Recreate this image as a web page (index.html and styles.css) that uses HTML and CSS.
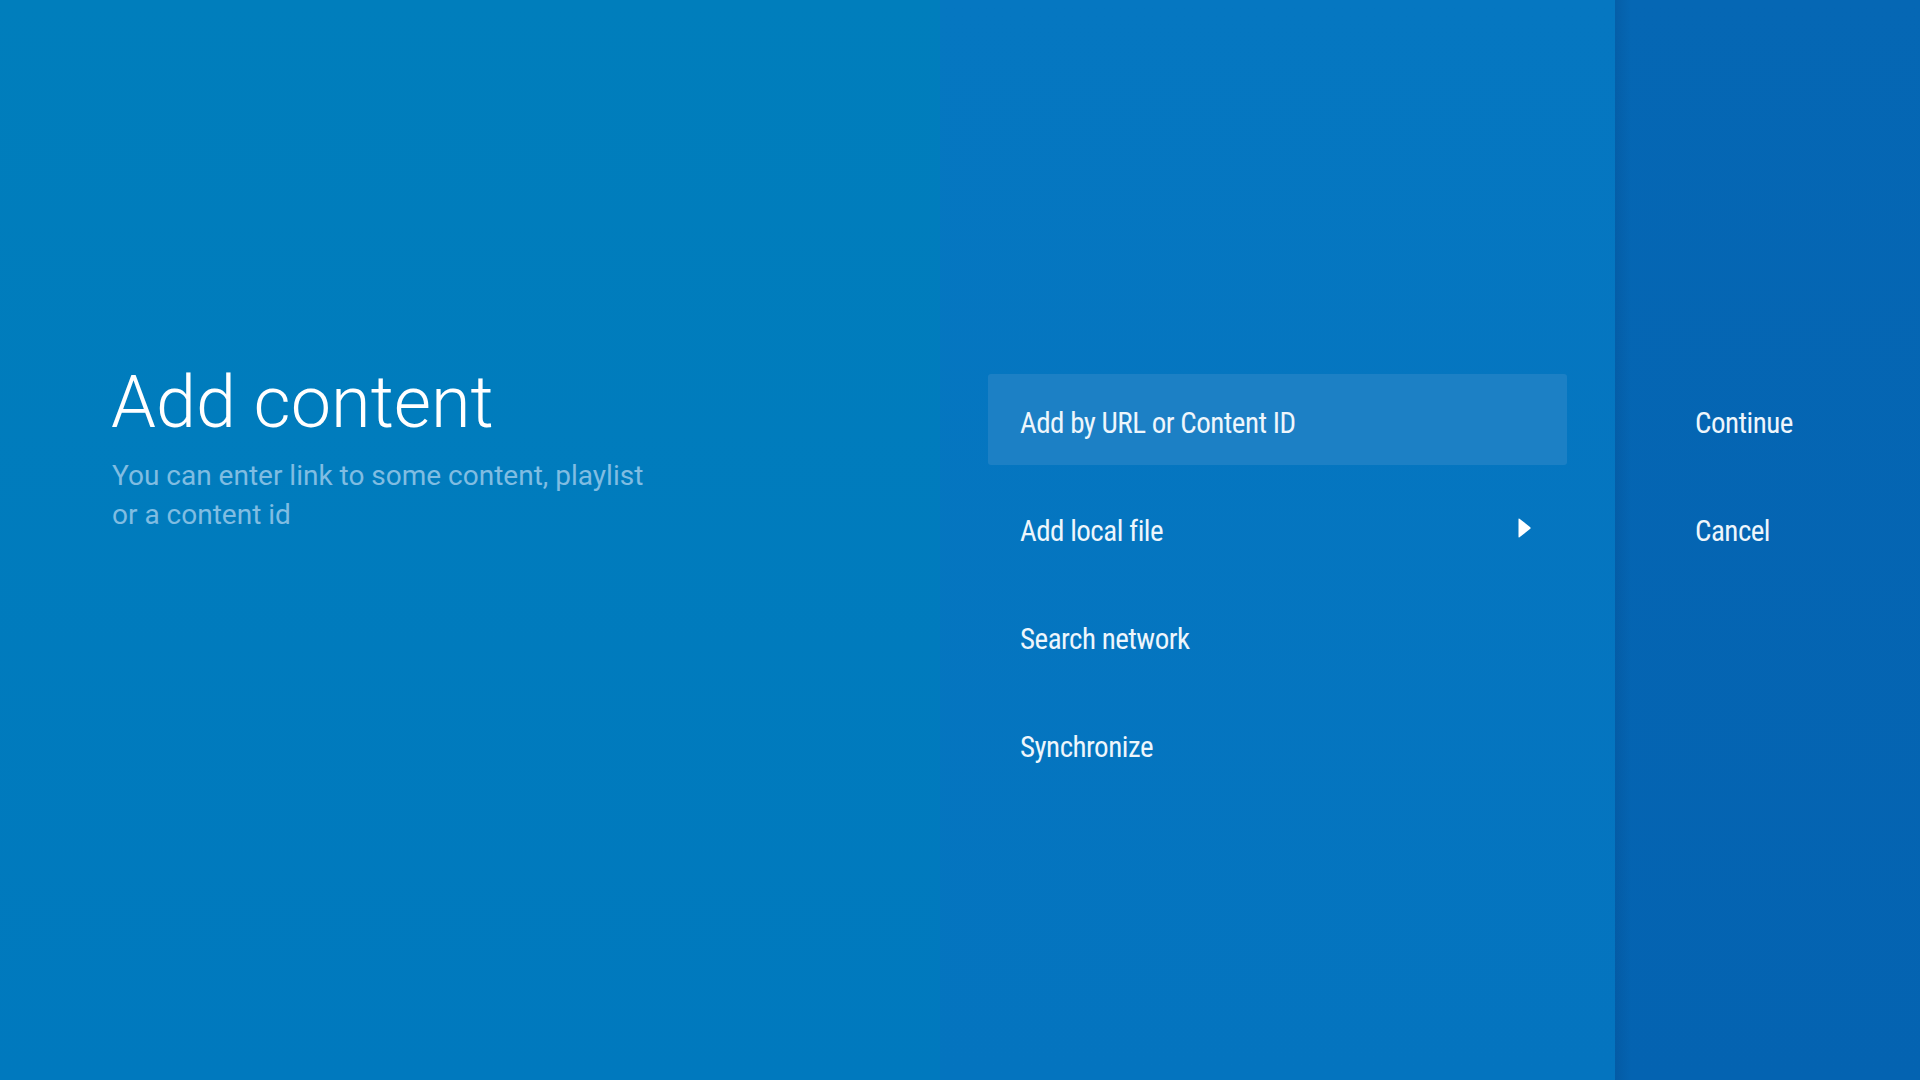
FILE: index.html
```html
<!DOCTYPE html>
<html lang="en">
<head>
<meta charset="utf-8">
<title>Add content</title>
<link rel="stylesheet" href="styles.css">
</head>
<body>
<div class="screen">
  <section class="guidance">
    <h1 class="guidance-title">Add content</h1>
    <p class="guidance-desc">You can enter link to some content, playlist<br>or a content id</p>
  </section>
  <section class="actions">
    <div class="action selected"><span class="action-title">Add by URL or Content ID</span></div>
    <div class="action"><span class="action-title">Add local file</span>
      <svg class="chevron" width="13" height="20" viewBox="0 0 13 20"><path d="M0.5 1.2 Q0.5 0 1.5 0.8 L12.3 9.2 Q13 10 12.3 10.8 L1.5 19.2 Q0.5 20 0.5 18.8 Z" fill="#ffffff"/></svg>
    </div>
    <div class="action"><span class="action-title">Search network</span></div>
    <div class="action"><span class="action-title">Synchronize</span></div>
  </section>
  <section class="buttons">
    <div class="button-action"><span class="action-title">Continue</span></div>
    <div class="button-action"><span class="action-title">Cancel</span></div>
  </section>
</div>
</body>
</html>
```

FILE: styles.css
```css
html, body {
  margin: 0;
  padding: 0;
}
body {
  width: 1920px;
  height: 1080px;
  overflow: hidden;
  font-family: Roboto, "Noto Sans", sans-serif;
}
.screen {
  display: flex;
  width: 1920px;
  height: 1080px;
}
.guidance {
  width: 940px;
  box-sizing: border-box;
  padding: 367px 0 0 111px;
  background: linear-gradient(180deg, #007ebc 0%, #0079be 100%);
}
.guidance-title {
  margin: 0;
  font-family: Roboto, sans-serif;
  font-weight: 300;
  font-size: 72px;
  line-height: 72px;
  color: #ffffff;
}
.guidance-desc {
  margin: 17px 0 0 1px;
  font-family: Roboto, sans-serif;
  font-weight: 400;
  font-size: 28px;
  line-height: 39px;
  color: #80bde2;
}
.actions {
  width: 675px;
  box-sizing: border-box;
  padding: 374px 48px 0 48px;
  display: flex;
  flex-direction: column;
  gap: 17px;
  background: linear-gradient(180deg, #0577c1 0%, #0474bf 100%);
}
.action {
  height: 91px;
  box-sizing: border-box;
  padding: 6px 36px 0 32px;
  border-radius: 3px;
  display: flex;
  align-items: center;
}
.action.selected {
  background: #1c80c5;
}
.action-title {
  font-family: "Roboto Condensed", Roboto, sans-serif;
  font-size: 29px;
  letter-spacing: -0.5px;
  line-height: 30px;
  color: #eef6fc;
}
.chevron {
  margin-left: auto;
  margin-top: -6px;
  display: block;
}
.buttons {
  flex: 1;
  box-sizing: border-box;
  padding: 374px 0 0 80px;
  display: flex;
  flex-direction: column;
  gap: 17px;
  background:
    linear-gradient(90deg, rgba(0, 20, 60, 0.10) 0px, rgba(0, 20, 60, 0) 16px),
    linear-gradient(180deg, #0567b4 0%, #0463b1 100%);
}
.button-action {
  height: 91px;
  box-sizing: border-box;
  padding-top: 6px;
  display: flex;
  align-items: center;
}
```
